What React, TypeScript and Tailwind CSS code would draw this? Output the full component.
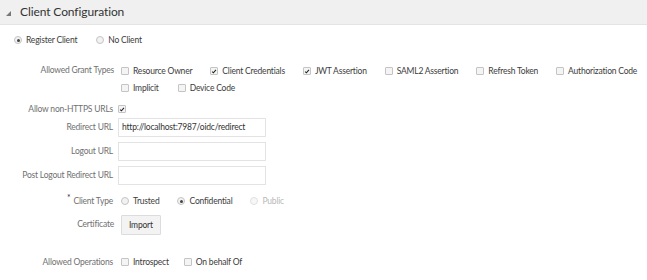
import React from "react";

const font = { fontFamily: "Lato, 'Open Sans', sans-serif" };

function Check({ checked = false }: { checked?: boolean }) {
  return (
    <span className="inline-flex h-[8px] w-[8px] shrink-0 items-center justify-center rounded-[1px] border border-[#c4c4c4] bg-[#f4f4f4]">
      {checked && (
        <svg viewBox="0 0 8 8" className="h-[7px] w-[7px]">
          <path d="M1.5 4.2 L3.2 5.8 L6.6 1.8" fill="none" stroke="#222" strokeWidth="1.4" />
        </svg>
      )}
    </span>
  );
}

function Radio({ checked = false, disabled = false }: { checked?: boolean; disabled?: boolean }) {
  return (
    <span
      className={`inline-flex h-[8px] w-[8px] shrink-0 items-center justify-center rounded-full border ${
        disabled ? "border-[#e0e0e0] bg-[#f7f7f7]" : "border-[#c4c4c4] bg-[#f2f2f2]"
      }`}
    >
      {checked && <span className="h-[3px] w-[3px] rounded-full bg-[#444]" />}
    </span>
  );
}

function Opt({ children, checked, radio, disabled }: { children: React.ReactNode; checked?: boolean; radio?: boolean; disabled?: boolean }) {
  return (
    <span className="flex items-center gap-[4px] whitespace-nowrap">
      {radio ? <Radio checked={checked} disabled={disabled} /> : <Check checked={checked} />}
      <span className={disabled ? "text-[#b8b8b8]" : "text-[#3c3c3c]"}>{children}</span>
    </span>
  );
}

function Row({ label, children, className = "", star }: { label: string; children?: React.ReactNode; className?: string; star?: boolean }) {
  return (
    <div className={`flex items-center ${className}`}>
      <div className="w-[114px] shrink-0 whitespace-nowrap pr-[1px] text-right text-[#707070]">
        {star && <span className="relative -top-[3px] mr-[3px] text-[#333]">*</span>}
        {label}
      </div>
      <div className="flex items-center pl-[4px]">{children}</div>
    </div>
  );
}

function Field({ value = "" }: { value?: string }) {
  return (
    <div className="flex h-[19px] w-[148px] items-center whitespace-nowrap border border-[#e3e3e3] bg-white px-[3px] text-[#333]">
      {value}
    </div>
  );
}

export default function App() {
  return (
    <div className="h-[280px] w-[647px] overflow-hidden bg-white text-[8.5px] leading-none tracking-[-0.2px]" style={font}>
      <div className="flex h-[25px] items-center border-b border-[#e4e4e4] bg-[#f0f0f0] pl-[6px]">
        <svg viewBox="0 0 6 6" className="mt-[3px] h-[5px] w-[5px]">
          <path d="M6 0 L6 6 L0 6 Z" fill="#777" />
        </svg>
        <span className="ml-[9px] text-[12px] tracking-[-0.1px] text-[#333]">Client Configuration</span>
      </div>

      <div className="mt-[7px] flex h-[16px] items-center gap-[19px] pl-[14px]">
        <Opt radio checked>Register Client</Opt>
        <Opt radio>No Client</Opt>
      </div>

      <div className="mt-[15px] flex">
        <div className="w-[114px] shrink-0 whitespace-nowrap pt-[3px] text-right text-[#707070]">Allowed Grant Types</div>
        <div className="flex flex-col pl-[7px]">
          <div className="flex h-[16px] items-center gap-[18px]">
            <Opt>Resource Owner</Opt>
            <Opt checked>Client Credentials</Opt>
            <Opt checked>JWT Assertion</Opt>
            <Opt>SAML2 Assertion</Opt>
            <Opt>Refresh Token</Opt>
            <Opt>Authorization Code</Opt>
          </div>
          <div className="mt-[1px] flex h-[16px] items-center gap-[19px]">
            <Opt>Implicit</Opt>
            <Opt>Device Code</Opt>
          </div>
        </div>
      </div>

      <Row label="Allow non-HTTPS URLs" className="mt-[5px] h-[16px]">
        <Check checked />
      </Row>

      <Row label="Redirect URL" className="mt-[1px]">
        <Field value="http://localhost:7987/oidc/redirect" />
      </Row>
      <Row label="Logout URL" className="mt-[5px]">
        <Field />
      </Row>
      <Row label="Post Logout Redirect URL" className="mt-[5px]">
        <Field />
      </Row>

      <Row label="Client Type" star className="mt-[8px] h-[16px]">
        <div className="flex items-center gap-[18px] pl-[3px]">
          <Opt radio>Trusted</Opt>
          <Opt radio checked>Confidential</Opt>
          <Opt radio disabled>Public</Opt>
        </div>
      </Row>

      <div className="mt-[6px] flex items-start">
        <div className="w-[114px] shrink-0 pt-[5px] text-right text-[#707070]">Certificate</div>
        <div className="pl-[7px]">
          <button className="flex h-[20px] items-center rounded-[1px] border border-[#dcdcdc] bg-[#f3f3f3] px-[7px] text-[#333]">
            Import
          </button>
        </div>
      </div>

      <Row label="Allowed Operations" className="mt-[19px] h-[16px]">
        <div className="flex items-center gap-[15px] pl-[3px]">
          <Opt>Introspect</Opt>
          <Opt>On behalf Of</Opt>
        </div>
      </Row>
    </div>
  );
}
